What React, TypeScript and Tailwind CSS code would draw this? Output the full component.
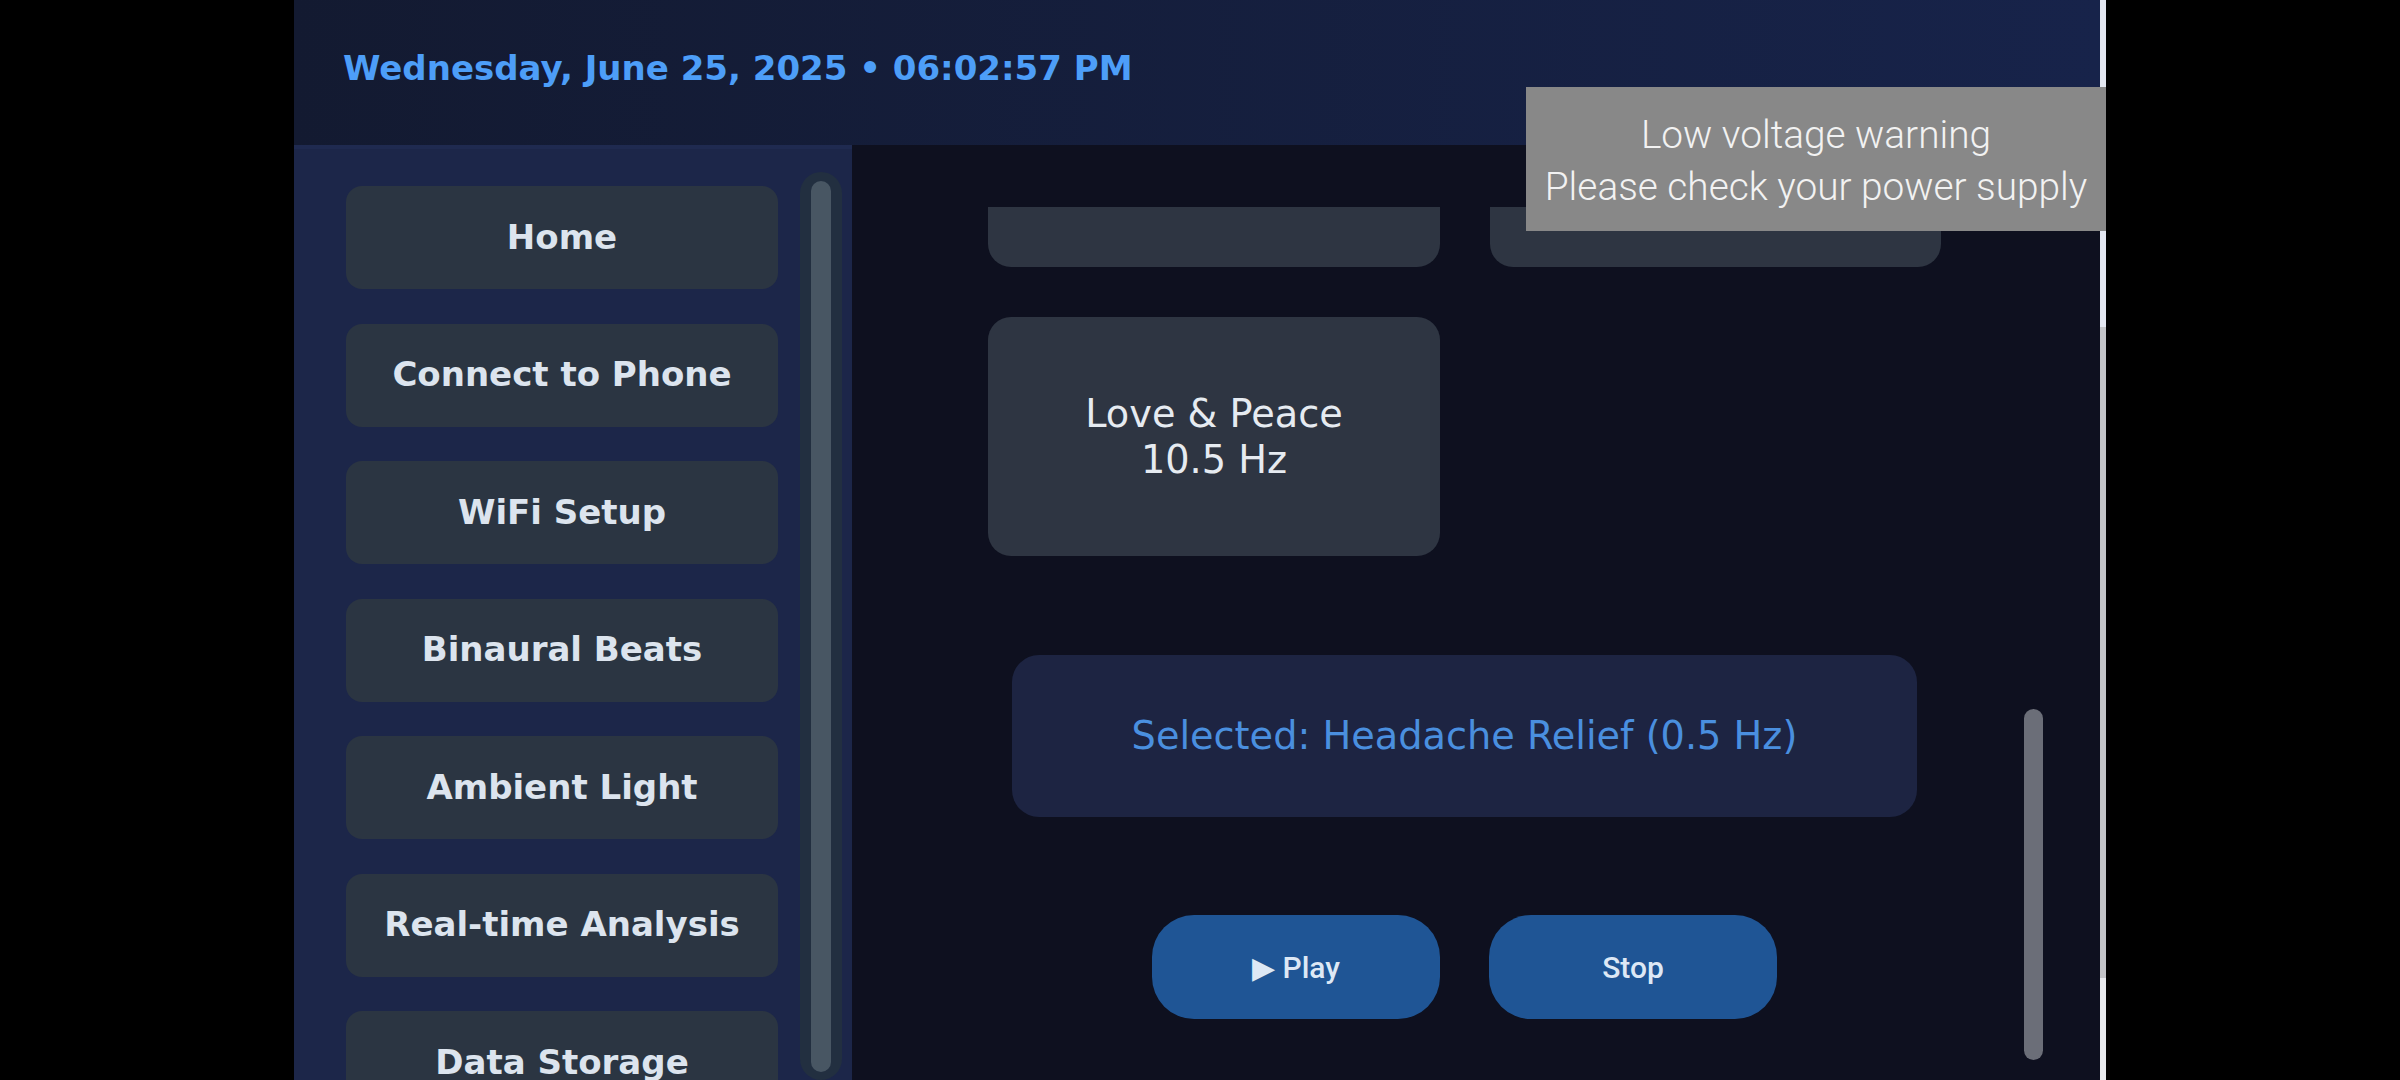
import React from 'react';

const navItems = [
  'Home',
  'Connect to Phone',
  'WiFi Setup',
  'Binaural Beats',
  'Ambient Light',
  'Real-time Analysis',
  'Data Storage',
];

// the first row is scrolled above the viewport, only its lower edge shows
const presets = [
  { name: '', hz: '' },
  { name: '', hz: '' },
  { name: 'Love & Peace', hz: '10.5 Hz' },
];

const NavButton: React.FC<{ label: string }> = ({ label }) => (
  <button
    type="button"
    className="w-[432px] h-[103px] shrink-0 rounded-[16px] bg-[#2b3542] text-[#dce4ee] text-[34px] font-bold leading-none pb-[2px] font-['DejaVu_Sans',sans-serif]"
  >
    {label}
  </button>
);

const PresetCard: React.FC<{ name: string; hz: string }> = ({ name, hz }) => (
  <div className="h-[239px] rounded-[23px] bg-[#2e3542] flex flex-col items-center justify-center text-[#e6ebf1] text-[38.25px] leading-[46px] font-['DejaVu_Sans',sans-serif]">
    {name && <span>{name}</span>}
    {hz && <span>{hz}</span>}
  </div>
);

export default function App() {
  return (
    <div className="relative w-[2400px] h-[1080px] bg-black flex overflow-hidden">
      <div className="w-[294px] shrink-0" />

      <div className="w-[1806px] h-full shrink-0 flex flex-col">
        {/* header */}
        <header className="h-[145px] shrink-0 flex items-center pl-[49px] pb-[9px] bg-gradient-to-r from-[#131a31] to-[#17234a]">
          <span className="text-[34px] font-bold leading-none text-[#4d9ef8] font-['DejaVu_Sans',sans-serif]">
            Wednesday, June 25, 2025 • 06:02:57 PM
          </span>
        </header>

        <div className="flex-1 flex min-h-0">
          {/* sidebar */}
          <aside className="w-[558px] shrink-0 flex bg-[#1c2649] border-t-[4px] border-[#1f2a50] overflow-hidden">
            <div className="ml-[52px] pt-[37px] flex flex-col gap-[34.5px]">
              {navItems.map(item => (
                <NavButton key={item} label={item} />
              ))}
            </div>
            <div className="ml-[22px] mt-[23px] w-[42px] rounded-full bg-[#222f40] flex justify-center pt-[9px]">
              <div className="w-[20px] h-[891px] rounded-full bg-[#485663]" />
            </div>
          </aside>

          {/* main content */}
          <main className="relative flex-1 bg-[#0e101f] overflow-hidden">
            <div className="mt-[62px] h-[873px] overflow-hidden">
              <div className="-mt-[179px] pr-[23px] flex flex-col items-center">
                <div className="grid grid-cols-[452px_451px] gap-[50px]">
                  {presets.map((p, i) => (
                    <PresetCard key={i} name={p.name} hz={p.hz} />
                  ))}
                </div>

                <div className="mt-[99px] w-[905px] h-[162px] rounded-[27px] bg-[#1d2442] flex items-center justify-center text-[#4a8fdf] text-[38.25px] font-['DejaVu_Sans',sans-serif]">
                  Selected: Headache Relief (0.5 Hz)
                </div>

                <div className="mt-[98px] flex gap-[49px]">
                  <button
                    type="button"
                    className="w-[288px] h-[104px] rounded-[42px] bg-[#1f5595] text-[#dde8f5] text-[30px] font-medium font-['Roboto',sans-serif]"
                  >
                    ▶ Play
                  </button>
                  <button
                    type="button"
                    className="w-[288px] h-[104px] rounded-[42px] bg-[#1f5595] text-[#dde8f5] text-[30px] font-medium font-['Roboto',sans-serif]"
                  >
                    Stop
                  </button>
                </div>
              </div>
            </div>

            {/* content scrollbar */}
            <div className="absolute left-[1172px] top-[564px] w-[19px] h-[351px] rounded-full bg-[#6b6e78]" />
          </main>
        </div>
      </div>

      {/* window scrollbar edge */}
      <div className="w-[6px] h-full shrink-0 flex flex-col">
        <div className="h-[327px] bg-[#e4e8f2]" />
        <div className="h-[651px] bg-[#c3c4c8]" />
        <div className="flex-1 bg-[#e9eaee]" />
      </div>

      {/* system notification */}
      <div className="absolute left-[1526px] top-[87px] w-[580px] h-[144px] bg-[#888888] flex flex-col items-center justify-center pt-[3px] text-[#f2f2f2] text-[38.8px] leading-[52px] font-light font-['Roboto',sans-serif]">
        <span>Low voltage warning</span>
        <span>Please check your power supply</span>
      </div>
    </div>
  );
}
